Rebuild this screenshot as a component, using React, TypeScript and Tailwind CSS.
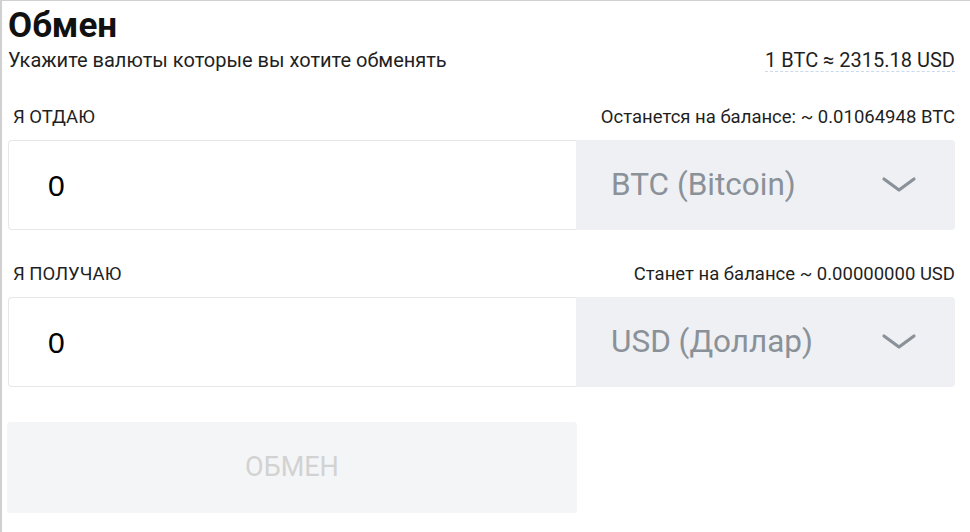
import { useState } from "react";

function Chevron() {
  return (
    <svg width="36" height="18" viewBox="0 0 36 18" fill="none">
      <path d="M3 3 L18 14 L33 3" stroke="#8b9198" strokeWidth="3.2" strokeLinecap="round" strokeLinejoin="round" />
    </svg>
  );
}

type RowProps = {
  label: string;
  note: string;
  value: string;
  currency: string;
};

function ExchangeRow({ label, note, value, currency }: RowProps) {
  const [amount, setAmount] = useState(value);
  return (
    <div>
      <div className="flex items-center justify-between h-[22px] text-[18.5px] leading-[22px] text-[#1f1f1f]">
        <span className="pl-[5px]">{label}</span>
        <span>{note}</span>
      </div>
      <div className="flex mt-[12px] h-[90px]">
        <div className="flex-1 flex items-center border border-[#e6e7e9] border-r-0 rounded-l-[4px] bg-white">
          <input
            value={amount}
            onChange={(e) => setAmount(e.target.value)}
            className="w-full pl-[39px] text-[30px] text-black bg-transparent outline-none font-['Liberation_Sans',Arial,sans-serif]"
          />
        </div>
        <div className="w-[379px] flex items-center justify-between bg-[#eef0f3] rounded-r-[4px] pl-[35px] pr-[38px]">
          <span className="text-[31.5px] text-[#8b9198]">{currency}</span>
          <Chevron />
        </div>
      </div>
    </div>
  );
}

export default function App() {
  return (
    <div className="w-[970px] h-[532px] bg-white border-t border-l-2 border-[#d0d0d0] pl-[6px] pr-[15px] overflow-hidden font-['Roboto',sans-serif]">
      <h1 className="text-[35px] font-bold leading-[40px] pt-[5px] text-[#111]">Обмен</h1>
      <div className="mt-[2px] flex items-end justify-between text-[20px] leading-[24px] text-[#1f1f1f]">
        <span>Укажите валюты которые вы хотите обменять</span>
        <span className="border-b border-dashed border-[#c9d9ee] leading-[22px]">1 BTC ≈ 2315.18 USD</span>
      </div>

      <div className="mt-[34px] flex flex-col gap-[33px]">
        <ExchangeRow label="Я ОТДАЮ" note="Останется на балансе: ~ 0.01064948 BTC" value="0" currency="BTC (Bitcoin)" />
        <ExchangeRow label="Я ПОЛУЧАЮ" note="Станет на балансе ~ 0.00000000 USD" value="0" currency="USD (Доллар)" />
      </div>

      <button className="mt-[35px] w-[570px] -ml-[1px] h-[91px] bg-[#f4f5f7] rounded-[3px] text-[27px] text-[#d2d2d2] uppercase">
        Обмен
      </button>
    </div>
  );
}
